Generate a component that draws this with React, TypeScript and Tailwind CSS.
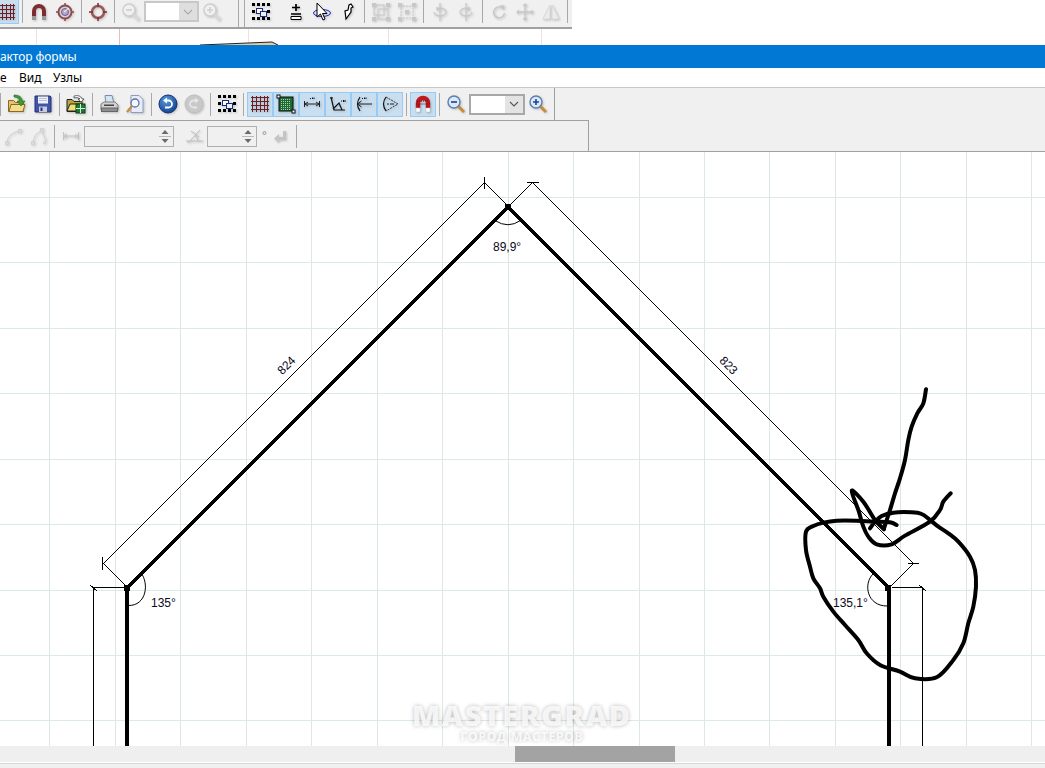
import React from "react";

const I = ({ children }: { children: React.ReactNode }) => (
  <svg width="20" height="20" viewBox="0 0 20 20" fill="none" className="drop-shadow-[1px_1px_1px_rgba(0,0,0,0.2)]">
    {children}
  </svg>
);

const Cell = ({ children, on }: { children: React.ReactNode; on?: boolean }) => (
  <div
    className={
      on
        ? "w-[26px] h-[25px] shrink-0 flex items-center justify-center bg-[#c9dff0] border border-[#95cbf5]"
        : "w-[26px] h-[25px] shrink-0 flex items-center justify-center"
    }
  >
    {children}
  </div>
);

const Sep = () => (
  <div className="w-[7px] shrink-0 flex justify-center">
    <div className="w-px h-[23px] bg-[#a8a8a8]" />
  </div>
);

const Grid = () => (
  <I>
    <path d="M2.5 2v16M6.5 2v16M10.5 2v16M14.5 2v16M17.5 2v16M1 3.5h18M1 7.5h18M1 11.5h18M1 15.5h18" stroke="#6f1d22" shapeRendering="crispEdges" />
  </I>
);

const GreenGrid = () => (
  <I>
    <rect x="3" y="3" width="14" height="14" fill="#1d6a33" stroke="#111" />
    <path d="M5 5h10M5 7h10M5 9h10M5 11h10M5 13h10M5 15h10" stroke="#a5d3ae" strokeDasharray="1 1" shapeRendering="crispEdges" />
    <rect x="1" y="1" width="3" height="3" fill="#fff" stroke="#111" />
    <rect x="16" y="16" width="3" height="3" fill="#fff" stroke="#111" />
  </I>
);

const Marks = () => <path d="M8 4.5h1M10.5 3.5v1.5M12 3.5v1.5" stroke="#111" />;

const DimW = () => (
  <I>
    <path d="M2.5 7v6M17.5 7v6M3 10h14M3 10l3-2M3 10l3 2M17 10l-3-2M17 10l-3 2" stroke="#222" />
    <Marks />
  </I>
);
const DimA = () => (
  <I>
    <path d="M3 3l3 13h11M5 15l6-6 3 7M2 4h3" stroke="#111" strokeWidth="1.2" />
    <path d="M13 7h1M15.5 6v2M17 6v2" stroke="#111" />
  </I>
);
const DimR = () => (
  <I>
    <path d="M6 3Q1 10 6 17" stroke="#111" strokeWidth="1.2" />
    <path d="M3.5 10H18M3.5 10l4-3M3.5 10l4 3" stroke="#222" />
    <Marks />
  </I>
);
const DimF = () => (
  <I>
    <path d="M6 3Q1 10 6 17" stroke="#111" strokeWidth="1.2" />
    <path d="M6 3l12 7-12 7" stroke="#333" strokeDasharray="2 1" />
    <path d="M7 10h2M11 9v2M13 9v2" stroke="#222" />
  </I>
);

const Magnet = ({ c, tip }: { c: string; tip: string }) => (
  <I>
    <path d="M5 14V9a5 5 0 0 1 10 0v5" stroke={c} strokeWidth="4" />
    <rect x="3" y="14" width="4" height="4" fill={tip} />
    <rect x="13" y="14" width="4" height="4" fill={tip} />
  </I>
);
const RedMagnet = () => (
  <I>
    <path d="M5 14V9a5 5 0 0 1 10 0v5" stroke="#c2171d" strokeWidth="4.5" />
    <path d="M3.5 10h13M4 7h12M5 12.5h1M14 12.5h1" stroke="#5a1010" strokeDasharray="1 1" />
    <rect x="3" y="14" width="4" height="4" fill="#fff" stroke="#bbb" strokeWidth=".5" />
    <rect x="13" y="14" width="4" height="4" fill="#fff" stroke="#bbb" strokeWidth=".5" />
  </I>
);
const Target = () => (
  <I>
    <circle cx="10" cy="10" r="6.5" stroke="#8f4a50" strokeWidth="2" />
    <circle cx="10" cy="10" r="3.5" fill="#b9a7cc" stroke="#6c5a8c" />
    <path d="M10 1v3M10 16v3M1 10h3M16 10h3" stroke="#8f4a50" strokeWidth="1.5" />
    <path d="M9 10l5-4" stroke="#fff" />
  </I>
);
const Life = () => (
  <I>
    <circle cx="10" cy="10" r="6" stroke="#9a5a5a" strokeWidth="2.5" />
    <path d="M10 1v4M10 15v4M1 10h4M15 10h4" stroke="#7c2f30" strokeWidth="1.5" />
  </I>
);
const Mag = ({ sign, gray }: { sign: "-" | "+"; gray?: boolean }) => (
  <I>
    <path d="M12 12l6 6" stroke={gray ? "#d8d8d8" : "#c98a3c"} strokeWidth="3" />
    <circle cx="8" cy="8" r="6" fill={gray ? "#f0f0f0" : "#dbe9f7"} stroke={gray ? "#cfcfcf" : "#5b7fae"} strokeWidth="1.4" />
    <path d={sign === "+" ? "M5 8h6M8 5v6" : "M5 8h6"} stroke={gray ? "#cfcfcf" : "#1f3f9a"} strokeWidth="1.6" />
  </I>
);

const Dots = () => (
  <I>
    <path d="M1 2.5h3M6 2.5h3M11 2.5h3M16 2.5h3M1 9.5h3M16 9.5h3M1 16.5h3M6 16.5h3M11 16.5h3M16 16.5h3" stroke="#000" strokeWidth="3" shapeRendering="crispEdges" />
    <rect x="5.5" y="6.5" width="6" height="5" fill="#fff" stroke="#1a2a80" shapeRendering="crispEdges" />
    <rect x="9.5" y="9.5" width="6" height="5" fill="#e8eefb" stroke="#1a2a80" shapeRendering="crispEdges" />
  </I>
);

const Open = () => (
  <I>
    <path d="M1.5 6.5h5l2 2h8v9h-15z" fill="#e6c36a" stroke="#8a6a22" />
    <path d="M2 17.5l2-7h14l-2 7z" fill="#f5dc8e" stroke="#8a6a22" />
    <path d="M7 1c5 0 8 2 8.5 6H18l-4 5-4-5h2.5C12 4.5 10 3 7 3z" fill="#3d9a34" stroke="#246a1e" strokeWidth=".6" />
  </I>
);
const Save = () => (
  <I>
    <path d="M2 2h15l1 1v15H2z" fill="#4055a8" stroke="#27306e" />
    <rect x="5" y="2.5" width="10" height="7" fill="#f0f2fa" />
    <path d="M6 4.5h8M6 6.5h8" stroke="#b8bede" />
    <rect x="6" y="12.5" width="8" height="5.5" fill="#c8cce0" />
    <rect x="7.5" y="13.5" width="2" height="3.5" fill="#27306e" />
  </I>
);
const Folder2 = () => (
  <I>
    <path d="M1 5.5h5l2 2h8v10H1z" fill="#b7a640" stroke="#222" />
    <path d="M1 17l3-7h13l-3 7z" fill="#efe07a" stroke="#222" />
    <rect x="10" y="10" width="9" height="9" fill="#1d7a35" stroke="#0d3d18" />
    <path d="M14.5 10v9M10 14.5h9" stroke="#d6f0d8" />
    <path d="M8 2c4-1 7 0 8 3h2l-3 3-3-3h2c-1-1-3-2-6-1z" fill="#fff" stroke="#333" strokeWidth=".7" />
  </I>
);
const Printer = () => (
  <I>
    <path d="M6 1.5h7l2 8H7z" fill="#d5e4f4" stroke="#7b8da8" />
    <path d="M2 10l3-2h11l3 3v5H2z" fill="#d2d2d2" stroke="#7d7d7d" />
    <rect x="2.5" y="14" width="16" height="3.5" fill="#8f8f8f" stroke="#666" />
    <rect x="5" y="10.5" width="10" height="1.5" fill="#444" />
  </I>
);
const Preview = () => (
  <I>
    <path d="M6 1.5h8l4 4v13H6z" fill="#e7edf8" stroke="#8d9cc0" />
    <circle cx="10" cy="9" r="4" fill="#f5f9ff" stroke="#5d72a5" strokeWidth="1.3" />
    <path d="M7 12l-5 6" stroke="#c98a3c" strokeWidth="2.2" />
  </I>
);
const Undo = () => (
  <I>
    <defs>
      <radialGradient id="bg1" cx="40%" cy="30%" r="75%">
        <stop offset="0%" stopColor="#5c9be0" />
        <stop offset="100%" stopColor="#0e3f8c" />
      </radialGradient>
    </defs>
    <circle cx="10" cy="10" r="9" fill="url(#bg1)" stroke="#0c3272" />
    <path d="M8 6.5h2.5a3.5 3.5 0 0 1 0 7H7" stroke="#fff" strokeWidth="1.8" />
    <path d="M9 3.5v6L5 6.5z" fill="#fff" />
  </I>
);
const Redo = () => (
  <I>
    <circle cx="10" cy="10" r="9" fill="#c8c8c8" stroke="#bdbdbd" />
    <path d="M12 6.5H9.5a3.5 3.5 0 0 0 0 7H13" stroke="#e6e6e6" strokeWidth="1.8" />
    <path d="M11 3.5v6l4-3z" fill="#e6e6e6" />
  </I>
);

const PlusBar = () => (
  <I>
    <path d="M6 5.5h8M10 2v7" stroke="#000" strokeWidth="1.7" />
    <path d="M5 12h10" stroke="#000" strokeWidth="1.5" />
    <path d="M5 14.5h10v3H5z" fill="#fff" stroke="#000" />
  </I>
);
const Cursor = () => (
  <I>
    <ellipse cx="10" cy="11" rx="8.5" ry="3.5" stroke="#1a22c8" />
    <path d="M5 1v14l3.5-3 2.5 6 2-1-2.5-5.5H15z" fill="#fff" stroke="#000" />
  </I>
);
const Pen = () => (
  <I>
    <path d="M13 2l2 3-2 1v4l-5 7-1-8 3-1 1-5z" fill="#fff" stroke="#000" strokeWidth="1.2" />
  </I>
);
const gray = "#c8c8c8";
const Frame1 = () => (
  <I>
    <rect x="3" y="3" width="10" height="10" stroke={gray} />
    <rect x="7" y="7" width="10" height="10" stroke={gray} />
    <path d="M1 1h4v4H1zM15 1h4v4h-4zM1 15h4v4H1zM15 15h4v4h-4z" fill={gray} />
  </I>
);
const Frame2 = () => (
  <I>
    <path d="M4 6v8M16 6v8M6 4h8M6 16h8" stroke={gray} strokeDasharray="2 1" />
    <path d="M1 1h4v4H1zM15 1h4v4h-4zM1 15h4v4H1zM15 15h4v4h-4zM8 8h4v4H8z" fill={gray} />
  </I>
);
const Rot1 = () => (
  <I>
    <path d="M10 1v18M4 10a6 4 0 1 0 6-4" stroke={gray} strokeWidth="1.2" />
    <path d="M6 5l5 1-4 3z" fill={gray} />
  </I>
);
const Rot2 = () => (
  <I>
    <path d="M10 1v18M16 10a6 4 0 1 1-6-4" stroke={gray} strokeWidth="1.2" />
    <path d="M14 5l-5 1 4 3z" fill={gray} />
  </I>
);
const Rotate = () => (
  <I>
    <path d="M14 6.5a5.5 5.5 0 1 0 1.5 4.5" stroke={gray} strokeWidth="1.4" />
    <path d="M11 3l4.5 .5-.5 4.5z" fill={gray} />
  </I>
);
const Move = () => (
  <I>
    <path d="M10 2v16M2 10h16" stroke={gray} strokeWidth="1.3" />
    <path d="M10 1l2.5 3h-5zM10 19l2.5-3h-5zM1 10l3-2.5v5zM19 10l-3-2.5v5z" fill={gray} />
  </I>
);
const Mirror = () => (
  <I>
    <path d="M9 3v14H2zM11 3v14h7z" fill="#ececec" stroke="#d8d8d8" />
  </I>
);
const Curve1 = () => (
  <I>
    <path d="M4 16Q5 8 15 5" stroke="#d0d0d0" />
    <path d="M2.5 15.5h3v3h-3zM15.5 3.5h3v3h-3z" stroke="#d0d0d0" />
  </I>
);
const Curve2 = () => (
  <I>
    <path d="M4 16Q5 8 12 5M13 5l4 10" stroke="#d0d0d0" />
    <path d="M2.5 15.5h3v3h-3zM11.5 2.5h3v3h-3z" stroke="#d0d0d0" />
    <path d="M14 15l3 3M17 15l-3 3" stroke="#d0d0d0" />
  </I>
);
const DimGray = () => (
  <I>
    <path d="M2.5 6v8M17.5 6v8M3 10h14M3 10l3-2M3 10l3 2M17 10l-3-2M17 10l-3 2" stroke="#c4c4c4" />
  </I>
);
const AngleGray = () => (
  <I>
    <path d="M2 15h17M4 17L16 4M11 10c2 1 3 3 3 5M7 5l8 6" stroke="#bcbcbc" />
  </I>
);
const Enter = () => (
  <I>
    <path d="M13 5h3v9H9v3l-5-4.5L9 8v3h4z" fill="#c4c4c4" />
  </I>
);

const Spin = ({ w }: { w: string }) => (
  <div className={`${w} h-[21px] shrink-0 border border-[#b0b0b0] bg-[#f0f0f0] flex justify-end items-center`}>
    <svg width="16" height="19" viewBox="0 0 16 19">
      <path d="M8 3l3.5 4h-7z" fill="#6a6a6a" />
      <path d="M2 9.5h12" stroke="#b8b8b8" />
      <path d="M8 16l3.5-4h-7z" fill="#6a6a6a" />
    </svg>
  </div>
);

const Combo = ({ w, disabled }: { w: string; disabled?: boolean }) => (
  <div
    className={
      disabled
        ? `${w} h-[21px] shrink-0 border-2 border-[#c8c8c8] bg-[#dedede] flex`
        : `${w} h-[21px] shrink-0 border-2 border-[#a8a8a8] bg-[#e3e3e3] flex`
    }
  >
    <div className="flex-1 bg-white" />
    <div className="w-[18px] flex items-center justify-center">
      <svg width="10" height="6" viewBox="0 0 10 6">
        <path d="M1 1l4 4 4-4" fill="none" stroke={disabled ? "#a8a8a8" : "#555"} strokeWidth="1.1" />
      </svg>
    </div>
  </div>
);

const xs = [49, 115, 180, 246, 311, 377, 442, 508, 573, 639, 704, 769, 835, 900, 966, 1031];
const ys = [197, 262, 328, 393, 459, 524, 590, 655, 720];

// Catmull-Rom smoothing for the hand-drawn strokes
const smooth = (p: number[][]) => {
  let d = `M${p[0][0]} ${p[0][1]}`;
  for (let i = 0; i < p.length - 1; i++) {
    const a = p[Math.max(i - 1, 0)];
    const b = p[i];
    const c = p[i + 1];
    const e = p[Math.min(i + 2, p.length - 1)];
    d += `C${b[0] + (c[0] - a[0]) / 6} ${b[1] + (c[1] - a[1]) / 6} ${c[0] - (e[0] - b[0]) / 6} ${c[1] - (e[1] - b[1]) / 6} ${c[0]} ${c[1]}`;
  }
  return d;
};

const Drawing = () => (
  <svg className="absolute inset-0" width="1045" height="594" viewBox="0 152 1045 594" fill="none">
    <g shapeRendering="crispEdges">
      {xs.map((x) => (
        <rect key={x} x={x} y={152} width="1" height="594" fill="#dde8e3" />
      ))}
      {ys.map((y) => (
        <rect key={y} x={0} y={y} width="1045" height="1" fill="#dcebe2" />
      ))}
      {/* thin dimension lines */}
      <path
        d="M103.5 563.5L484.5 182.5M103.5 563.5L127.5 587.5M484.5 182.5L507.5 205.5M102.5 557V570M484.5 177V189M532.5 182.5L913.5 563.5M532.5 182.5L509.5 205.5M913.5 563.5L889.5 587.5M527 182.5H539M908 563.5H919"
        stroke="#000"
      />
      <path d="M93.5 587.5H125M93.5 587.5V746M90 585L97 591M892 587.5H923M922.5 587.5V746M919 585L926 591" stroke="#000" />
      {/* thick outline */}
      <path d="M127 746V588L508 207L889 588V746" stroke="#000" strokeWidth="3.4" strokeLinejoin="miter" />
      <rect x="505" y="204" width="6" height="6" fill="#000" />
      <rect x="124" y="585" width="6" height="6" fill="#000" />
      <rect x="885" y="585" width="6" height="6" fill="#000" />
    </g>
    <g stroke="#000" strokeWidth="1">
      <path d="M495 220.5Q508 229 520.5 220.5" />
      <path d="M141 573C149 583 147 606 128 605.5" />
      <path d="M873 574C863 584 867 606 887 606" />
    </g>
    <g className="font-['Liberation_Sans',sans-serif] text-[12px] fill-[#0a0a20]">
      <text x="493" y="251">89,9°</text>
      <text x="151" y="607">135°</text>
      <text x="833" y="607">135,1°</text>
      <text x="287" y="366" textAnchor="middle" dominantBaseline="middle" transform="rotate(-45 287 366)">824</text>
      <text x="728" y="366" textAnchor="middle" dominantBaseline="middle" transform="rotate(45 728 366)">823</text>
    </g>
    {/* hand-drawn scribble */}
    <g transform="translate(780 370) scale(0.3333)" stroke="#000" strokeWidth="12" strokeLinejoin="round" strokeLinecap="round">
      <path d={smooth([[438,58],[430,100],[412,130],[395,170],[385,210],[375,270],[360,325],[345,370],[330,420],[312,475]])} />
      <path d={smooth([[312,478],[285,450],[250,395],[215,362],[235,420],[250,470],[265,500],[290,523],[335,523],[375,497],[450,455],[480,420],[490,395],[512,370]])} />
      <path d={smooth([[350,465],[330,457],[280,455],[230,452],[170,452],[130,458],[100,468],[78,485],[78,540],[90,590],[100,625],[120,655],[130,680],[160,725],[195,765],[235,810],[260,850],[300,885],[360,905],[405,925],[470,922],[520,870],[550,820],[565,760],[580,710],[588,650],[585,600],[570,560],[535,515],[505,490],[475,470],[450,450],[425,432],[395,427],[340,428],[305,438],[285,455],[270,475]])} />
    </g>
  </svg>
);

export default function App() {
  return (
    <div className="w-[1045px] h-[768px] overflow-hidden bg-white flex flex-col font-['Noto_Sans',sans-serif]">
      {/* background window toolbar */}
      <div className="w-[572px] h-[29px] shrink-0 bg-[#f0f0f0] border-b-2 border-[#a0a0a0] flex items-center pb-1">
        <div className="-ml-[7px] flex">
          <Cell on><Grid /></Cell>
        </div>
        <Sep />
        <Cell><Magnet c="#7d2c30" tip="#9a9a9a" /></Cell>
        <Cell><Target /></Cell>
        <Sep />
        <Cell><Life /></Cell>
        <Sep />
        <Cell><Mag sign="-" gray /></Cell>
        <Combo w="w-[55px]" disabled />
        <Cell><Mag sign="+" gray /></Cell>
        <div className="w-[14px] shrink-0 h-[27px] self-start border-r border-[#a8a8a8]" />
        <div className="w-[6px] shrink-0 h-[27px] self-start border-r border-[#a8a8a8]" />
        <div className="w-[3px] shrink-0" />
        <Cell><Dots /></Cell>
        <div className="w-[9px] shrink-0" />
        <Cell><PlusBar /></Cell>
        <Cell><Cursor /></Cell>
        <Cell><Pen /></Cell>
        <Sep />
        <Cell><Frame1 /></Cell>
        <Cell><Frame2 /></Cell>
        <Sep />
        <Cell><Rot1 /></Cell>
        <Cell><Rot2 /></Cell>
        <Sep />
        <Cell><Rotate /></Cell>
        <Cell><Move /></Cell>
        <Cell><Mirror /></Cell>
        <Sep />
      </div>

      {/* sliver of the window behind */}
      <svg width="1045" height="16" viewBox="0 29 1045 16" className="shrink-0 block" fill="none">
        <g shapeRendering="crispEdges">
          <path d="M36.5 29v16M248.5 29v16M388.5 29v16M541.5 29v16" stroke="#fbdcdc" />
          <path d="M119.5 29v16" stroke="#f4b8b8" />
        </g>
        <path d="M200 45L272 42L278 45Z" fill="#e8c99a" />
        <path d="M200 45L272 42L278 45" stroke="#222" />
      </svg>

      {/* title bar */}
      <div className="h-[23px] shrink-0 bg-[#0078d4] flex items-center">
        <span className="text-[12px] tracking-[-0.1px] text-white whitespace-nowrap">актор формы</span>
      </div>

      {/* menu */}
      <div className="h-[19px] shrink-0 bg-white flex items-center text-[12px] text-black">
        <span className="w-[19px]">е</span>
        <span className="w-[34px]">Вид</span>
        <span>Узлы</span>
      </div>

      {/* toolbars */}
      <div className="h-[65px] shrink-0 bg-[#f0f0f0] border-t border-b border-t-[#c8c8c8] border-b-[#a0a0a0]">
        <div className="w-[555px] h-[32px] border-r border-[#a0a0a0] flex items-center">
          <div className="w-[4px] shrink-0 flex justify-start">
            <div className="w-px h-[23px] bg-[#a8a8a8]" />
          </div>
          <Cell><Open /></Cell>
          <Cell><Save /></Cell>
          <Sep />
          <Cell><Folder2 /></Cell>
          <Sep />
          <Cell><Printer /></Cell>
          <Cell><Preview /></Cell>
          <Sep />
          <Cell><Undo /></Cell>
          <Cell><Redo /></Cell>
          <Sep />
          <Cell><Dots /></Cell>
          <Sep />
          <Cell on><Grid /></Cell>
          <Cell on><GreenGrid /></Cell>
          <Cell on><DimW /></Cell>
          <Cell on><DimA /></Cell>
          <Cell on><DimR /></Cell>
          <Cell on><DimF /></Cell>
          <Sep />
          <Cell on><RedMagnet /></Cell>
          <Sep />
          <Cell><Mag sign="-" /></Cell>
          <Combo w="w-[56px]" />
          <Cell><Mag sign="+" /></Cell>
        </div>
        <div className="w-[589px] h-[31px] border-t border-r border-[#a0a0a0] flex items-center">
          <Cell><Curve1 /></Cell>
          <Cell><Curve2 /></Cell>
          <div className="w-[5px] shrink-0 flex justify-center">
            <div className="w-px h-[23px] bg-[#a8a8a8]" />
          </div>
          <div className="w-px shrink-0" />
          <Cell><DimGray /></Cell>
          <Spin w="w-[90px]" />
          <div className="w-[7px] shrink-0" />
          <Cell><AngleGray /></Cell>
          <Spin w="w-[50px]" />
          <span className="w-[10px] shrink-0 pl-[5px] text-[11px] leading-none text-[#8a8a8a] -mt-[3px]">°</span>
          <Cell><Enter /></Cell>
          <Sep />
        </div>
      </div>

      {/* canvas */}
      <div className="relative h-[594px] shrink-0 bg-white overflow-hidden">
        <Drawing />
        <div className="absolute left-[365px] w-[314px] top-[548px] flex flex-col items-center text-white/80 font-['Open_Sans',sans-serif] font-extrabold [text-shadow:0_0_4px_rgba(0,0,0,0.28)]">
          <span className="text-[29px] tracking-[1.8px] h-[29px] leading-[29px]">MASTERGRAD</span>
          <span className="text-[12px] font-bold tracking-[0.8px] h-[12px] leading-[12px] mt-[2px]">ГОРОД МАСТЕРОВ</span>
        </div>
      </div>

      {/* scrollbar */}
      <div className="h-[16px] shrink-0 bg-[#efefef] flex">
        <div className="w-[515px]" />
        <div className="w-[160px] bg-[#a3a3a3]" />
      </div>
      <div className="h-[1px] shrink-0 bg-white" />
      <div className="h-[1px] shrink-0 bg-[#d8d8d8]" />
      <div className="flex-1 bg-[#f0f0f0]" />
    </div>
  );
}
